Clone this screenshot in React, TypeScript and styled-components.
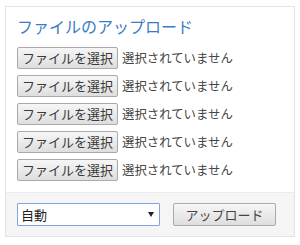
import React from 'react'
import styled, { createGlobalStyle } from 'styled-components'

const GlobalStyle = createGlobalStyle`
  html, body {
    margin: 0;
    padding: 0;
    background: #ffffff;
  }
  body {
    font-family: 'Noto Sans CJK JP', 'Noto Sans', sans-serif;
  }
`

const FILE_ROWS = 5

export default function App() {
  return (
    <>
      <GlobalStyle />
      <Panel>
        <Body>
          <Title>ファイルのアップロード</Title>
          <FileList>
            {Array(FILE_ROWS)
              .fill(null)
              .map((_, i) => (
                <FileRow key={i}>
                  <GrayButton type="button">ファイルを選択</GrayButton>
                  <FileName>選択されていません</FileName>
                </FileRow>
              ))}
          </FileList>
        </Body>
        <Footer>
          <SelectBox>
            <span>自動</span>
            <Arrow />
          </SelectBox>
          <UploadButton type="button">アップロード</UploadButton>
        </Footer>
      </Panel>
    </>
  )
}

const Panel = styled.div`
  margin: 6px 5px 0 5px;
  width: 290px;
  height: 231px;
  box-sizing: border-box;
  border: 1px solid #e3e3e3;
  background: #ffffff;
  display: flex;
  flex-direction: column;
`

const Body = styled.div`
  flex: 1;
  padding: 8px 11px 0 11px;
`

const Title = styled.h3`
  margin: 0 0 10px 0;
  font-size: 16px;
  line-height: 22px;
  font-weight: 400;
  color: #3a7cc4;
`

const FileList = styled.div`
  display: flex;
  flex-direction: column;
  gap: 6px;
`

const FileRow = styled.div`
  display: flex;
  align-items: center;
  gap: 4px;
`

const GrayButton = styled.button`
  height: 22px;
  padding: 0 4px;
  box-sizing: border-box;
  border: 1px solid #a9a9a9;
  border-radius: 2px;
  background: linear-gradient(#f6f6f6, #dedede);
  font-family: inherit;
  font-size: 13px;
  line-height: 20px;
  color: #3a3a3a;
  white-space: nowrap;
`

const FileName = styled.span`
  font-size: 12.4px;
  color: #444;
  white-space: nowrap;
`

const Footer = styled.div`
  flex: none;
  display: flex;
  align-items: center;
  gap: 13px;
  height: 43px;
  padding: 0 11px 0 11px;
  background: #f5f5f5;
  border-top: 1px solid #ebebeb;
`

const SelectBox = styled.div`
  position: relative;
  width: 143px;
  height: 23px;
  box-sizing: border-box;
  border: 1px solid #7ea6dc;
  border-radius: 1px;
  background: #ffffff;
  display: flex;
  align-items: center;
  padding: 0 3px;
  font-size: 13px;
  color: #222;
`

const Arrow = styled.span`
  position: absolute;
  right: 5px;
  top: 8px;
  width: 0;
  height: 0;
  border-left: 3.5px solid transparent;
  border-right: 3.5px solid transparent;
  border-top: 5px solid #222;
`

const UploadButton = styled(GrayButton)`
  width: 103px;
  height: 23px;
  color: #444;
`
